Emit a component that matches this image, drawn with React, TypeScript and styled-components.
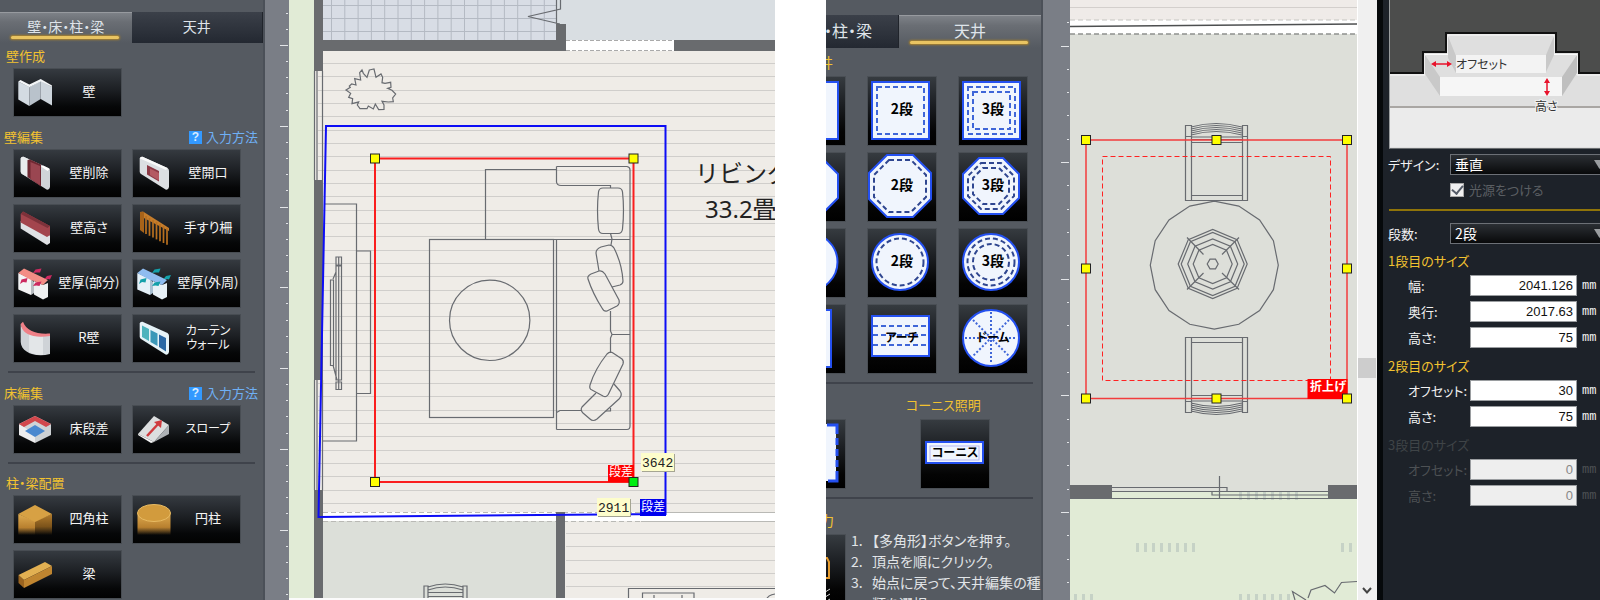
import React from "react";
import styled, { createGlobalStyle, css } from "styled-components";

const GlobalStyle = createGlobalStyle`
  * { box-sizing: border-box; }
  html, body, #root { height: 100%; }
  body {
    margin: 0;
    background: #fff;
    overflow: hidden;
    font-family: "Noto Sans CJK JP", "Liberation Sans", sans-serif;
    font-feature-settings: "palt";
    font-size: 13px;
    line-height: 20px;
  }
  button, select, input {
    font: inherit;
    font-feature-settings: inherit;
  }
`;

const line = "#686b70";
const gold = "#f2c230";

/* ---------- shared layout ---------- */

const Page = styled.main`
  display: flex;
  height: 100%;
  min-height: 600px;
  overflow: hidden;
`;

const Divider = styled.div`
  flex: 0 0 51px;
  background: #fff;
`;

const Sidebar = styled.aside<{ $width: number; $top: number }>`
  flex: 0 0 ${(p) => p.$width}px;
  padding-top: ${(p) => p.$top}px;
  background: #555a61;
  border-right: 2px solid #4b5058;
  overflow: hidden;
`;

const Ruler = styled.svg<{ $width: number }>`
  flex: 0 0 ${(p) => p.$width}px;
  width: ${(p) => p.$width}px;
  height: 100%;
  background: #7a7e86;
`;

const Canvas = styled.svg<{ $grow: number }>`
  display: block;
  flex: ${(p) => p.$grow} 1 0;
  min-width: 0;
  width: 0;
  height: 100%;
`;

const Tabs = styled.div<{ $height: number; $cols: string }>`
  display: grid;
  grid-template-columns: ${(p) => p.$cols};
  height: ${(p) => p.$height}px;
`;

const Tab = styled.button<{ $active?: boolean; $size: number }>`
  position: relative;
  padding: 0 0 4px;
  border: 0;
  color: #dfe4ea;
  font-size: ${(p) => p.$size}px;
  white-space: nowrap;
  background: linear-gradient(#3b4049, #2d323b 60%, #232831);
  border-right: 1px solid #20242b;
  ${(p) =>
    p.$active &&
    css`
      background: linear-gradient(#7d8187, #6a6e74 30%, #555a61);
      border-right: 0;
      border-top: 1px solid #979a9f;
      &::after {
        content: "";
        position: absolute;
        left: 11px;
        right: 13px;
        bottom: 4px;
        height: 3px;
        border-radius: 2px;
        background: #e9c462;
        box-shadow: 0 0 2px 1px #a9812a;
      }
    `}
`;

const CutTab = styled(Tab)`
  display: flex;
  align-items: center;
  justify-content: flex-end;
  padding-right: 26px;
`;

const Rule = styled.hr<{ $left?: number; $right: number }>`
  height: 2px;
  margin: 8px ${(p) => p.$right}px 0 ${(p) => p.$left ?? 0}px;
  border: 0;
  background: #3f434b;
`;

const Heading = styled.h2<{ $size?: number }>`
  margin: 0;
  font-size: ${(p) => p.$size ?? 13}px;
  font-weight: 400;
  line-height: 20px;
  color: ${gold};
  white-space: nowrap;
`;

/* ---------- wall tools ---------- */

const SectionHead = styled.div<{ $gap: number; $indent?: boolean }>`
  display: flex;
  justify-content: space-between;
  align-items: center;
  height: 20px;
  margin: ${(p) => p.$gap}px 5px 2px ${(p) => (p.$indent ? 6 : 4)}px;
`;

const HelpLink = styled.a`
  display: flex;
  align-items: center;
  gap: 4px;
  color: #6fb0f5;
  text-decoration: none;
`;

const HelpMark = styled.span`
  width: 13px;
  height: 13px;
  background: #3399ff;
  color: #d8ebff;
  font: bold 12px/13px "Liberation Sans", sans-serif;
  text-align: center;
`;

const ToolGrid = styled.div`
  display: grid;
  grid-template-columns: 109px 109px;
  gap: 6px 10px;
  padding-left: 13px;
`;

const Tool = styled.button`
  display: grid;
  grid-template-columns: 36px 1fr;
  align-items: center;
  gap: 5px;
  height: 49px;
  padding: 0 0 0 3px;
  border: 1px solid #484d53;
  background: linear-gradient(#353a40, #1c1f23 45%, #060708 80%, #020202);
  color: #f4f4f4;
  line-height: 14px;
  white-space: pre;
  svg {
    width: 36px;
    height: 36px;
  }
`;

const ToolLabel = styled.span<{ $small?: boolean }>`
  padding: 0 5px 4px 0;
  margin-right: -4px;
  font-size: ${(p) => (p.$small ? 12 : 13)}px;
  text-align: center;
`;

const slab = "M3.7 2.500Q4 .5 6.500 .8L31.500 12Q33 13 33 15V31Q32.500 34 30 33.700L5 18Q3.700 17 3.700 15.500Z";

const arrows = "M16 7L18.500 3.500 24.500 2.500 23 6.500 19.500 6.500ZM27.500 13L30 10 35 9 33 13.500 30.500 13ZM3 18L4.500 13.500 10.500 12 9.500 16.500 6 16ZM16 20L18.500 16.500 24.500 15.500 22.500 20 19.500 19.500Z";

const icons: Record<string, React.ReactNode> = {
  wall: (
    <>
      <path d="M1.3 6.5 12.3 12V31L1.3 24.5Z" fill="#d3dbe2" />
      <path d="M12.3 12 23.7 6V24L12.3 31Z" fill="#b9c2cb" />
      <path d="M23.7 6 35 12V30.5L23.7 24Z" fill="#cdd5dc" />
      <path d="M1.3 6.5 3.5 5 12.3 9.5 23.7 4 35 10.5 35 12 23.7 6.5 12.3 12.3Z" fill="#f2f5f7" />
    </>
  ),
  erase: (
    <>
      <path d={slab} fill="#d0d4d8" />
      <path d="M3.7 2.500Q4 .5 6.500 .8L12 3.300 10.500 5.500V21L5 18Q3.700 17 3.700 15.500Z" fill="#e9ebed" />
      <path d="M10.500 4 13 3.500 24 8.500V30.500L10.500 21Z" fill="#6f2832" />
      <path d="M13.500 6 23 10V29L13.500 23Z" fill="#9a4651" />
      <path d="M24 10.500 26 9.500 33 13 30.500 15Z" fill="#fff" />
    </>
  ),
  opening: (
    <>
      <path d={slab} fill="#dcdfe2" />
      <path d="M4 2.500Q4 .5 6.500 .8L31.500 12 30 14Z" fill="#fafafa" />
      <path d="M11 9 23 15V25.500L11 18.500Z" fill="#8c3a46" />
      <path d="M14 12.500 23 17V24.500L14 19Z" fill="#b45a63" />
    </>
  ),
  height: (
    <>
      <path d="M3.7 10 33 24.5V32L30 34 3.7 17.5Z" fill="#dfe1e4" />
      <path d="M3.7 3 6 .5 33 15V24L30 26 3.7 11.5Z" fill="#a3454d" />
      <path d="M3.7 3 6 .5 33 15 30.5 17Z" fill="#7d323a" />
    </>
  ),
  rail: (
    <>
      <path d="M4 1 7 .5 33 17V20L4 5Z" fill="#c57d2c" />
      <path d="M4 1H8V22L4 19Z" fill="#a86319" />
      {[10, 13.5, 17, 20.5, 24, 27.5, 31].map((x, i) => (
        <path key={x} d={`M${x} ${5 + i * 2}V${23 + i * 1.8}`} stroke="#b9701f" strokeWidth="1.7" />
      ))}
    </>
  ),
  partial: (
    <>
      <path d="M1.300 7 14 13V29L1.300 23.500Z" fill="#f3f4f5" />
      <path d="M14 13 17 16V27L14 29Z" fill="#b8bdc2" />
      <path d="M17 15 26 19 31 17V31L26 33.500 17 28.500Z" fill="#eef0f1" />
      <path d="M1.300 7 7 2.500 31 14 26 19 17 15 14 14Z" fill="#f38d85" />
      <path d={arrows} fill="#cc2a60" />
    </>
  ),
  outer: (
    <>
      <path d="M1.300 7 14 13V29L1.300 23.500Z" fill="#e4f0f8" />
      <path d="M14 13 17 16V27L14 29Z" fill="#a9c0d2" />
      <path d="M17 15 26 19 31 17V31L26 33.500 17 28.500Z" fill="#e8f1f7" />
      <path d="M1.300 7 7 2.500 31 14 26 19 17 15 14 14Z" fill="#8fbcf0" />
      <path d={arrows} fill="#14a0aa" />
    </>
  ),
  curve: (
    <>
      <path d="M3.7 3C6 13 20 16 33 14V33C18 37 4 31 3.7 21Z" fill="#cfd3d7" />
      <path d="M12 13C18 15 22 16 26 15V34C20 34 15 33 12 31Z" fill="#e3e6e8" />
      <path d="M3.7 3 6 .8C9 10 20 13.5 33 12.5V15C18 17.5 5 14 3.7 3Z" fill="#ef8087" />
    </>
  ),
  curtain: (
    <>
      <path d={slab} fill="#e6f3f8" />
      <path d="M6 4.500 13 8V20L6 16Z" fill="#4cb3bd" />
      <path d="M14.500 9 21.500 12.500V25L14.500 21Z" fill="#3b98b8" />
      <path d="M23 13.500 30 17V30.500L23 26Z" fill="#2a68a4" />
    </>
  ),
  step: (
    <>
      <path d="M2 12 18 20V31L2 23Z" fill="#ededee" />
      <path d="M34 12 18 20V31L34 23Z" fill="#cdd1d4" />
      <path d="M2 12 18 4 34 12 18 22Z" fill="#cfd3d6" />
      <path d="M8 19 18 13 28 19 18 25Z" fill="#4a88cf" />
      <path d="M2 12 18 4 34 12 29 15 18 9 7 15Z" fill="#d2474c" />
    </>
  ),
  slope: (
    <>
      <path d="M2 22 18 4 33 13 18 30Z" fill="#dcdedf" />
      <path d="M18 30 33 13V22L18 30Z" fill="#aeb2b6" />
      <path d="M2 22 18 30 15 31 2 23Z" fill="#f5f5f5" />
      <path d="M11 24 23 11" stroke="#cf3b3f" strokeWidth="2.500" fill="none" />
      <path d="M18 10 26 8 25 16Z" fill="#cf3b3f" />
    </>
  ),
  square: (
    <>
      <path d="M1.300 12 18 19V33H1.300Z" fill="url(#woodL)" />
      <path d="M35 12 18 19V33H35Z" fill="url(#woodR)" />
      <path d="M1.300 12 18 3 35 12 18 20Z" fill="#d7a144" />
    </>
  ),
  round: (
    <>
      <path d="M1.500 11V33H34.500V11Z" fill="url(#woodL)" />
      <ellipse cx="18" cy="11" rx="16.500" ry="8.500" fill="#d29b3d" stroke="#e8bb63" />
    </>
  ),
  beam: (
    <>
      <path d="M1.500 18 7 23V31L1.500 26Z" fill="#9a6420" />
      <path d="M1.500 18 28 5 35 9 7 23Z" fill="#e2b052" />
      <path d="M7 23 35 9V17L7 31Z" fill="#bf8530" />
    </>
  ),
};

type ToolSpec = { icon: string; label: string; small?: boolean };

function ToolButton({ icon, label, small }: ToolSpec) {
  return (
    <Tool type="button">
      <svg viewBox="0 0 36 36" aria-hidden="true">{icons[icon]}</svg>
      <ToolLabel $small={small}>{label}</ToolLabel>
    </Tool>
  );
}

const editTools: ToolSpec[] = [
  { icon: "erase", label: "壁削除" },
  { icon: "opening", label: "壁開口" },
  { icon: "height", label: "壁高さ" },
  { icon: "rail", label: "手すり柵" },
  { icon: "partial", label: "壁厚(部分)" },
  { icon: "outer", label: "壁厚(外周)" },
  { icon: "curve", label: "R壁" },
  { icon: "curtain", label: "カーテン\nウォール", small: true },
];

function Help() {
  return (
    <HelpLink href="#help">
      <HelpMark>?</HelpMark>
      入力方法
    </HelpLink>
  );
}

function WallTools() {
  return (
    <Sidebar $width={265} $top={12}>
      <Tabs $height={31} $cols="1fr 1fr">
        <Tab type="button" $active $size={14}>壁・床・柱・梁</Tab>
        <Tab type="button" $size={14}>天井</Tab>
      </Tabs>
      <SectionHead $gap={3} $indent>
        <Heading>壁作成</Heading>
      </SectionHead>
      <ToolGrid>
        <ToolButton icon="wall" label="壁" />
      </ToolGrid>
      <SectionHead $gap={10}>
        <Heading>壁編集</Heading>
        <Help />
      </SectionHead>
      <ToolGrid>
        {editTools.map((t) => (
          <ToolButton key={t.icon} {...t} />
        ))}
      </ToolGrid>
      <Rule $left={8} $right={8} />
      <SectionHead $gap={10}>
        <Heading>床編集</Heading>
        <Help />
      </SectionHead>
      <ToolGrid>
        <ToolButton icon="step" label="床段差" />
        <ToolButton icon="slope" label="スロープ" small />
      </ToolGrid>
      <Rule $left={8} $right={8} />
      <SectionHead $gap={9} $indent>
        <Heading>柱・梁配置</Heading>
      </SectionHead>
      <ToolGrid>
        <ToolButton icon="square" label="四角柱" />
        <ToolButton icon="round" label="円柱" />
        <ToolButton icon="beam" label="梁" />
      </ToolGrid>
      <svg width="0" height="0" aria-hidden="true">
        <defs>
          <linearGradient id="woodL" x1="0" y1="0" x2="0" y2="1">
            <stop offset="0" stopColor="#e0ac50" />
            <stop offset=".65" stopColor="#b8802f" />
            <stop offset="1" stopColor="#b8802f" stopOpacity="0" />
          </linearGradient>
          <linearGradient id="woodR" x1="0" y1="0" x2="0" y2="1">
            <stop offset="0" stopColor="#b27c2d" />
            <stop offset=".6" stopColor="#7c531a" />
            <stop offset="1" stopColor="#7c531a" stopOpacity="0" />
          </linearGradient>
        </defs>
      </svg>
    </Sidebar>
  );
}

/* ---------- rulers ---------- */

function Ticks({ width, first, pitch }: { width: number; first: number; pitch: number }) {
  const marks = Array.from({ length: 80 }, (_, i) => i - 4);
  return (
    <Ruler $width={width} aria-hidden="true">
      {marks.map((i) => (
        <rect
          key={i}
          x={i % 5 === 0 ? width - 9 : width - 3}
          y={Math.round(first + i * pitch)}
          width={i % 5 === 0 ? 8 : 2}
          height="1"
          fill="#e3e5e8"
        />
      ))}
    </Ruler>
  );
}

/* ---------- plan drawings ---------- */

const Outline = styled.g`
  fill: none;
  stroke: ${line};
  stroke-width: 1.2px;
`;

const RoomName = styled.text`
  font: 24px "Noto Sans", "Noto Sans CJK JP", sans-serif;
  font-feature-settings: normal;
  fill: #222;
`;

const TagText = styled.text<{ $bold?: boolean }>`
  font-size: 12px;
  font-weight: ${(p) => (p.$bold ? 700 : 400)};
  fill: #fff;
`;

const SizeText = styled.text`
  font: 13px "Liberation Mono", monospace;
  fill: #222;
`;

function Handle({ x, y, fill = "#ff0" }: { x: number; y: number; fill?: string }) {
  return <rect x={x - 4.5} y={y - 4.5} width="9" height="9" fill={fill} stroke="#222" />;
}

function SizeNote({ x, y, value }: { x: number; y: number; value: string }) {
  return (
    <>
      <rect x={x + 1} y={y + 1} width="33" height="18" fill="#a5a592" />
      <rect x={x} y={y} width="33" height="18" fill="#fdfdcb" />
      <SizeText x={x + 1} y={y + 14}>{value}</SizeText>
    </>
  );
}

const range = (n: number) => Array.from({ length: n }, (_, i) => i);

const plant =
  "208,210 222,207 228,232 243,222 248,232 246,248 255,250 272,247 273,262 263,265 276,271 287,282 278,294 280,305 265,306 246,304 252,315 252,328 236,329 226,312 220,327 205,318 201,326 180,326 172,315 176,306 156,311 158,296 146,292 152,280 138,270 151,262 148,258 155,252 168,255 164,236 182,240 179,218 186,210 190,220 201,232";

function LivingPlan() {
  return (
    <Canvas $grow={486} viewBox="289 0 486 600" preserveAspectRatio="xMinYMin slice">
      <rect x="289" y="0" width="486" height="600" fill="#efece7" />
      <rect x="289" y="0" width="25" height="600" fill="#e1ebd6" />
      <rect x="323" y="0" width="233" height="40" fill="#d8dde5" />
      <rect x="556" y="0" width="219" height="40" fill="#d9dee2" />
      <g stroke="#b4bac3">
        {range(17).map((i) => (
          <path key={i} d={`M${331.5 + i * 13.3} 0V40`} />
        ))}
        <path d="M323 5.500H556M323 18.500H556M323 31.500H556" />
      </g>
      <g stroke="#d0cecb">
        {range(34).map((i) => (
          <path key={i} d={`M318 ${Math.round(63 + i * 13.33) + 0.5}H775`} />
        ))}
        {range(5).map((i) => (
          <path key={i} d={`M566 ${Math.round(533 + i * 13.33) + 0.5}H775`} />
        ))}
      </g>
      <rect x="323" y="521" width="233" height="79" fill="#dcdfd9" />
      <rect x="323" y="512" width="452" height="9" fill="#fff" />
      <path d="M323 512.500H641M323 521.500H641" stroke="#b9b9b5" strokeDasharray="5 3" />
      <path d="M641 512.500H775M641 521.500H775" stroke="#b9b9b5" />
      <g fill="#696b6e">
        <rect x="314" y="0" width="9" height="71" />
        <rect x="314" y="180" width="9" height="200" />
        <rect x="314" y="490" width="9" height="110" />
        <rect x="314" y="40" width="252" height="11" />
        <rect x="556" y="24" width="10" height="17" />
        <rect x="674" y="40" width="101" height="11" />
        <rect x="556" y="512" width="9" height="88" />
      </g>
      <rect x="566" y="40" width="108" height="11" fill="#fff" />
      <path d="M566 40.500H674M566 50.500H674" stroke="#aaa" strokeDasharray="4 2" />
      <Outline>
        <path d="M314.500 71V180M317 71V180M322.500 71V180M314.500 380V490M317 380V490M322.500 380V490" />
        <path d="M556.500 0V24M560.500 0V9L528 16.500 560 24" />
        <polygon points={plant} transform="translate(300 0) scale(.3333)" vectorEffect="non-scaling-stroke" />
        <path d="M324 204H356.500V441H323M356.500 251H370.500V393.500H356.500" />
        <path d="M336 257h5.500v8h-5.500zM336 266h5.500v114h-5.500zM336 382h5.500v7.500h-5.500zM338.700 257V389M333 279L336 272M330.500 280h3v85.500h-3zM333 365L337 380" />
        <rect x="429.500" y="239.500" width="124" height="178" />
        <circle cx="489.700" cy="320.300" r="40.200" />
        <path d="M485.500 239.500V169.500H556.500M485 239.500H630M556.500 240V429.500" />
        <path d="M556.500 166.500V182Q557 185.500 561 185.500H610.500V188M556.500 166.500H627Q630 167 630 170V426Q630 429.500 627 429.500H556.500" />
        <path d="M603 188H618Q622 188 622.500 192 624.500 210 622.500 229 622 233.500 618 233.500H603Q599 233.500 598.500 229 596.500 210 598.500 192 599 188 603 188Z" />
        <path d="M610.500 233.500L612 239 611 245M610.500 311V331L612 334.500H630M612 334.500L610.500 338V353M556.500 412.500L560 410.500H582M610.500 408V411H606" />
        <path d="M599 271L596 253Q596 249 601 247L609 245Q612 245 614 248 622 264 623 281 623 284 620 285L612 287" />
        <path d="M588 279Q587 276 591 274L599 271Q602 270 605 274L619 300Q620 304 617 306L607 311Q604 312 602 308 593 294 588 279Z" />
        <path d="M607 354Q610 351 613 353L622 359Q624 361 623 364L609 393Q607 398 603 396L592 390Q589 389 590 385 595 369 607 354Z" />
        <path d="M596 393L582 407Q580 410 583 413L590 419Q593 422 597 419L619 399Q623 395 620 391L614 384" />
        <path d="M424 600V586H428V600M463 600V586H467V600M428 587Q445 581 463 587M428 590Q445 584 463 590M428 592.500H463M428 596.500H463" />
        <path d="M628.500 600V588.500H775M642.500 600V593H694V600M654 595V600M682 595V600M766 600Q768 595 775 594" />
      </Outline>
      <RoomName x="695" y="182">リビング</RoomName>
      <RoomName x="705" y="218">33.2畳</RoomName>
      <path d="M326 126H665.500V514L318.500 517Z" fill="none" stroke="#0d0df5" strokeWidth="2" />
      <rect x="375" y="158.500" width="258.500" height="323.500" fill="none" stroke="#fa1e1e" strokeWidth="2" />
      <rect x="608" y="465" width="26" height="17" fill="#f00" />
      <TagText x="609" y="476">段差</TagText>
      <Handle x={375} y={158.5} />
      <Handle x={633.5} y={158.5} />
      <Handle x={375} y={482} />
      <Handle x={633.5} y={482} fill="#0e1" />
      <rect x="640" y="499" width="26" height="17" fill="#00e" />
      <TagText x="641" y="511">段差</TagText>
      <SizeNote x={641} y={453} value="3642" />
      <SizeNote x={597} y={498} value="2911" />
      <rect x="289" y="598" width="486" height="2" fill="#fbfbfb" />
    </Canvas>
  );
}

function ring(cx: number, cy: number, r: number, n: number) {
  return range(n)
    .map((i) => {
      const a = (i / n) * Math.PI * 2;
      return `${(cx + r * Math.cos(a)).toFixed(1)},${(cy + r * Math.sin(a)).toFixed(1)}`;
    })
    .join(" ");
}

function GrassMarks({ x, y, n }: { x: number; y: number; n: number }) {
  return (
    <g fill="#c6d2c6">
      {range(n).map((i) => (
        <rect key={i} x={x + i * 8} y={y} width="3" height="9" />
      ))}
    </g>
  );
}

const chair =
  "M1185.500 125.500h6v75h-6zM1242.500 125.500h5v75h-5zM1185 136.500H1191M1242 136.500H1248M1191 137H1242M1191 139.500H1242M1191 142.500H1242M1191 195.500H1242M1191 200.500H1242" +
  "M1191 127Q1216 120 1242 127M1191 129Q1216 122 1242 129M1191 131Q1216 124 1242 131M1191 133Q1216 126 1242 133M1191 135Q1216 128 1242 135";

function CeilingPlan() {
  return (
    <Canvas $grow={287} viewBox="1070 0 287 600" preserveAspectRatio="xMinYMin slice">
      <rect x="1070" y="0" width="287" height="600" fill="#dddfd9" />
      <rect x="1070" y="0" width="287" height="20" fill="#efebe8" />
      <rect x="1070" y="20" width="287" height="14" fill="#fff" />
      <path d="M1070 7.500H1357" stroke="#d3cfcc" />
      <path d="M1070 20H1357" stroke="#c4c4c1" strokeDasharray="5 3" />
      <path d="M1070 34H1357" stroke="#8f918f" strokeWidth="1.500" strokeDasharray="5 3" />
      <path d="M1070 26.500L1357 24" stroke="#4d4f50" strokeWidth="1.500" />
      <rect x="1070" y="491" width="287" height="109" fill="#e1ebd6" />
      <GrassMarks x={1239} y={491} n={8} />
      <GrassMarks x={1136} y={543} n={8} />
      <GrassMarks x={1341} y={543} n={2} />
      <GrassMarks x={1074} y={594} n={3} />
      <GrassMarks x={1239} y={594} n={7} />
      <rect x="1112" y="487.500" width="115" height="4" fill="#dddfd9" />
      <rect x="1070" y="485" width="42" height="14" fill="#696b6e" />
      <rect x="1328" y="485" width="29" height="14" fill="#696b6e" />
      <Outline>
        <path d="M1070 498.500H1357M1112 487.500H1227V491M1112 491.500H1328M1328 495H1212V491M1219.500 476V499" />
        <path d="M1295 600L1292.500 591.500 1306 600M1308 598L1311 590 1325 585.500 1334.500 593 1341.500 582.500 1357 581.500" />
        <path d={chair} />
        <path d={chair} transform="matrix(1 0 0 -1 0 538)" />
        <polygon points={ring(1214.3, 265.2, 64, 16)} />
        {[34.5, 31.5, 25, 19.5].map((r) => (
          <polygon key={r} points={ring(1212.7, 264, r, 8)} />
        ))}
        <polygon points={ring(1212.7, 264, 5.5, 6)} />
        <path d="M1187 237.500L1203.500 254.500M1239 237.500L1222 254.500M1187 289.500L1203.500 273M1239 289.500L1222 273" />
      </Outline>
      <rect x="1086" y="140" width="261" height="258.500" fill="none" stroke="#f23c3c" strokeWidth="1.500" />
      <rect x="1102.500" y="156.500" width="228" height="224" fill="none" stroke="#f22" strokeDasharray="5 3" />
      <rect x="1307.500" y="379" width="40" height="20" fill="#f00" />
      <TagText x="1310" y="391" $bold>折上げ</TagText>
      {[1086, 1216.5, 1347].map((x) =>
        [140, 268.5, 398.5].map((y) =>
          x === 1216.5 && y === 268.5 ? null : <Handle key={`${x}-${y}`} x={x} y={y} />
        )
      )}
    </Canvas>
  );
}

/* ---------- ceiling tools ---------- */

const CutHeading = styled.div`
  display: flex;
  justify-content: flex-end;
  width: 7px;
  margin: 4px 0;
`;

const CeilingGrid = styled.div`
  display: grid;
  grid-template-columns: 20px 70px 70px;
  gap: 6px 21px;
`;

const CutCell = styled.div`
  display: flex;
  flex: 0 0 20px;
  justify-content: flex-end;
  overflow: hidden;
`;

const Shape = styled.button`
  flex: 0 0 70px;
  width: 70px;
  height: 70px;
  padding: 0;
  border: 1px solid #4a4f55;
  background: linear-gradient(#363b40, #1c1f23 40%, #040404 80%, #000);
  svg {
    display: block;
    width: 68px;
    height: 68px;
  }
`;

const ShapeText = styled.text<{ $small?: boolean }>`
  font-size: ${(p) => (p.$small ? 12 : 14)}px;
  font-weight: 700;
  fill: #000;
  text-anchor: middle;
`;

const CorniceHead = styled.div`
  margin: 11px 0 4px 80px;
`;

const CorniceRow = styled.div`
  display: flex;
  gap: 74px;
`;

const StepsHead = styled(CutHeading)`
  margin-top: 11px;
  width: 8px;
`;

const StepsRow = styled.div`
  display: flex;
  gap: 5px;
`;

const Steps = styled.ol`
  flex: 1;
  margin: -4px 0 0;
  padding: 0;
  color: #e2e5e8;
  font-size: 14px;
  line-height: 21px;
  list-style: none;
  li {
    display: flex;
  }
  b {
    flex: 0 0 21px;
    font-weight: 400;
  }
`;

const solid = { fill: "#f0f5fd", stroke: "#2450f0", strokeWidth: 2 };
const dashes = { fill: "none", stroke: "#3f66d8", strokeWidth: 2, strokeDasharray: "5 3" };
const darkDashes = { ...dashes, stroke: "#2f4690" };

function octagon(c: number, cy: number, r: number) {
  const k = Math.round(r * 0.42);
  return `M${c - k} ${cy - r}H${c + k}L${c + r} ${cy - k}V${cy + k}L${c + k} ${cy + r}H${c - k}L${c - r} ${cy + k}V${cy - k}Z`;
}

type ShapeProps = { label?: string; name: string; small?: boolean; children: React.ReactNode };

function ShapeButton({ label, name, small, children }: ShapeProps) {
  return (
    <Shape type="button" aria-label={name}>
      <svg viewBox="1 1 68 68">
        {children}
        {label && <ShapeText x="35" y="38" $small={small}>{label}</ShapeText>}
      </svg>
    </Shape>
  );
}

function CeilingTools() {
  return (
    <Sidebar $width={217} $top={15}>
      <Tabs $height={33} $cols="73px 1fr">
        <CutTab type="button" $size={16}>・柱・梁</CutTab>
        <Tab type="button" $active $size={16}>天井</Tab>
      </Tabs>
      <CutHeading>
        <Heading $size={14}>井</Heading>
      </CutHeading>
      <CeilingGrid>
        <CutCell>
          <ShapeButton name="四角 1">
            <rect x="5" y="6" width="57" height="57" {...solid} />
          </ShapeButton>
        </CutCell>
        <ShapeButton name="四角 2段" label="2段">
          <rect x="5" y="6" width="57" height="57" {...solid} />
          <rect x="10" y="11" width="47" height="47" {...dashes} />
        </ShapeButton>
        <ShapeButton name="四角 3段" label="3段">
          <rect x="5" y="6" width="57" height="57" {...solid} />
          <rect x="10" y="11" width="47" height="47" {...dashes} />
          <rect x="15" y="16" width="37" height="37" {...dashes} />
        </ShapeButton>
        <CutCell>
          <ShapeButton name="八角 1">
            <path d={octagon(33, 34, 29)} {...solid} />
          </ShapeButton>
        </CutCell>
        <ShapeButton name="八角 2段" label="2段">
          <path d={octagon(33, 34, 31)} {...solid} />
          <path d={octagon(33, 34, 26)} {...darkDashes} />
        </ShapeButton>
        <ShapeButton name="八角 3段" label="3段">
          <path d={octagon(33, 34, 28)} {...solid} />
          <path d={octagon(33, 34, 23)} {...darkDashes} />
          <path d={octagon(33, 34, 18)} {...darkDashes} />
        </ShapeButton>
        <CutCell>
          <ShapeButton name="円 1">
            <circle cx="33" cy="34" r="28.500" {...solid} />
          </ShapeButton>
        </CutCell>
        <ShapeButton name="円 2段" label="2段">
          <circle cx="33" cy="34" r="28" {...solid} />
          <circle cx="33" cy="34" r="23.500" {...darkDashes} />
        </ShapeButton>
        <ShapeButton name="円 3段" label="3段">
          <circle cx="33" cy="34" r="28" {...solid} />
          <circle cx="33" cy="34" r="23.500" {...darkDashes} />
          <circle cx="33" cy="34" r="18" {...darkDashes} />
        </ShapeButton>
        <CutCell>
          <ShapeButton name="勾配">
            <rect x="5" y="6" width="50" height="57" {...solid} />
          </ShapeButton>
        </CutCell>
        <ShapeButton name="アーチ" label="アーチ" small>
          <rect x="5" y="12" width="57" height="40" {...solid} />
          <path d="M6 22H62M6 31H62M6 41H62" {...dashes} />
        </ShapeButton>
        <ShapeButton name="ドーム" label="ドーム" small>
          <circle cx="33" cy="34" r="28" {...solid} />
          <path d="M33 8V60M7 34H59M15 16L51 52M51 16L15 52" {...dashes} strokeDasharray="2 2" />
        </ShapeButton>
      </CeilingGrid>
      <Rule $right={8} />
      <CorniceHead>
        <Heading>コーニス照明</Heading>
      </CorniceHead>
      <CorniceRow>
        <CutCell>
          <ShapeButton name="間接照明">
            <rect x="5" y="5" width="55" height="57" fill="#f0f5fd" />
            <path d="M51 6H61V62H51" fill="none" stroke="#2450f0" strokeWidth="3" strokeDasharray="19 4 7 4 7 4 7 4 19" />
          </ShapeButton>
        </CutCell>
        <ShapeButton name="コーニス" label="コーニス" small>
          <rect x="6" y="23" width="57" height="21" {...solid} />
          <rect x="10" y="27" width="49" height="14" fill="none" stroke="#b6b8f4" />
        </ShapeButton>
      </CorniceRow>
      <Rule $right={8} />
      <StepsHead>
        <Heading $size={14}>力</Heading>
      </StepsHead>
      <StepsRow>
        <CutCell>
          <ShapeButton name="多角形">
            <path d="M40 24H51L53 28V44H40" fill="none" stroke="#e59b2e" strokeWidth="2" />
            <path d="M46 60L54 55M46 65L54 60M46 70L54 65" stroke="#ddd" />
          </ShapeButton>
        </CutCell>
        <Steps>
          <li><b>1.</b><span>【多角形】ボタンを押す。</span></li>
          <li><b>2.</b><span>頂点を順にクリック。</span></li>
          <li><b>3.</b><span>始点に戻って、天井編集の種類を選択</span></li>
        </Steps>
      </StepsRow>
    </Sidebar>
  );
}

/* ---------- scroll bar ---------- */

const ScrollTrack = styled.div`
  display: flex;
  flex: 0 0 20px;
  flex-direction: column;
  align-items: center;
  min-width: 0;
  padding-right: 1px;
  background: #f0f0f0;
  border-left: 1px solid #fff;
`;

const Thumb = styled.div`
  width: 100%;
  height: 20px;
  margin-top: 358px;
  background: #cdcdcd;
`;

const ScrollArrow = styled.button`
  margin-top: auto;
  padding: 0;
  width: 18px;
  height: 18px;
  border: 0;
  background: none;
  svg { display: block; }
`;

/* ---------- properties ---------- */

const Props = styled.form`
  flex: 0 0 223px;
  border-left: 6px solid #06090b;
  background: #1d2229;
  color: #f2f2f2;
  overflow: hidden;
`;

const Preview = styled.svg`
  display: block;
  width: 211px;
  height: 149px;
  margin-left: 6px;
  border-left: 1px solid #9a9d9f;
  border-bottom: 1px solid #6a6d70;
`;

const PreviewText = styled.text`
  font-size: 12px;
  fill: #333;
  stroke: #f3f3f3;
  stroke-width: 2px;
  paint-order: stroke;
`;

const SelectRow = styled.div`
  display: grid;
  grid-template-columns: 62px 162px;
  align-items: center;
  height: 21px;
  margin: 5px 0 0 5px;
`;

const SelectWrap = styled.div`
  position: relative;
  svg {
    position: absolute;
    top: 6px;
    right: 7px;
    pointer-events: none;
  }
`;

const Select = styled.select`
  display: block;
  appearance: none;
  width: 100%;
  height: 21px;
  padding: 0 4px 1px;
  border: 1px solid #6c7076;
  border-radius: 0;
  background: linear-gradient(#2b2f34, #08090a);
  color: #fff;
  font-size: 14px;
  line-height: 18px;
`;

const CheckRow = styled.label`
  display: flex;
  align-items: center;
  gap: 5px;
  height: 20px;
  margin: 5px 0 0 67px;
  color: #5b5f63;
`;

const Check = styled.input`
  appearance: none;
  display: grid;
  place-items: center;
  width: 14px;
  height: 14px;
  margin: 0;
  border: 1px solid #aaa;
  background: #f0f0f0;
  &:checked::after {
    content: "";
    width: 5px;
    height: 9px;
    margin-top: -3px;
    border: solid #555c68;
    border-width: 0 2px 2px 0;
    transform: rotate(40deg);
  }
`;

const GoldRule = styled.hr`
  height: 2px;
  margin: 9px 0 12px 6px;
  border: 0;
  background: #8f7409;
`;

const Group = styled.fieldset`
  display: grid;
  gap: 5px;
  margin: 0;
  padding: 0 0 8px 5px;
  border: 0;
  min-width: 0;
  &:disabled { color: #4d5154; }
`;

const GroupTitle = styled.legend`
  padding: 0;
  height: 24px;
  line-height: 20px;
  color: ${gold};
  ${Group}:disabled & { color: #3f4447; }
`;

const Field = styled.label`
  display: grid;
  grid-template-columns: 62px 107px 24px;
  align-items: center;
  height: 21px;
  padding-left: 20px;
  white-space: nowrap;
`;

const Box = styled.input`
  width: 107px;
  height: 21px;
  padding: 0 3px;
  border: 1px solid #9a9da0;
  background: #fff;
  color: #111;
  font: 13px "Liberation Sans", sans-serif;
  text-align: right;
  &:disabled {
    background: #eee;
    color: #888;
  }
`;

const Unit = styled.span`
  padding-left: 5px;
  font: 12px "Liberation Mono", monospace;
`;

function Pick({ id, label, value }: { id: string; label: string; value: string }) {
  return (
    <SelectRow>
      <label htmlFor={id}>{label}</label>
      <SelectWrap>
        <Select id={id} defaultValue={value}>
          <option>{value}</option>
        </Select>
        <svg width="11" height="10" aria-hidden="true"><path d="M0 0H11L5.500 9Z" fill="#9a9da0" /></svg>
      </SelectWrap>
    </SelectRow>
  );
}

function SizeGroup({ title, fields, disabled }: { title: string; fields: [string, string][]; disabled?: boolean }) {
  return (
    <Group disabled={disabled}>
      <GroupTitle>{title}</GroupTitle>
      {fields.map(([label, value]) => (
        <Field key={label}>
          {label}
          <Box defaultValue={value} />
          <Unit>mm</Unit>
        </Field>
      ))}
    </Group>
  );
}

const GroupStack = styled.div`
  padding-top: 7px;
`;

function Properties() {
  return (
    <Props onSubmit={(e) => e.preventDefault()}>
      <Preview viewBox="1390 0 210 148">
        <rect x="1390" y="0" width="210" height="148" fill="#4c4d4c" />
        <path d="M1388 160V73H1423V52H1446V33H1556V52H1579V73H1602V160Z" fill="#dfdfdf" stroke="#111" strokeWidth="2" />
        <path d="M1390 75H1425V54.500H1448V35H1554V54.500H1577V75H1600" fill="none" stroke="#fafafa" />
        <path d="M1448 36L1456 56V73L1448 58ZM1554 36L1546 55V72L1554 55ZM1425 55L1440 77V96L1425 74Z" fill="#c9c9c9" />
        <path d="M1577 55L1562 77V96L1577 73Z" fill="#bfbfbf" />
        <rect x="1456" y="55" width="90" height="18" fill="#f3f3f3" />
        <rect x="1440" y="77" width="122" height="19" fill="#f6f6f6" />
        <rect x="1390" y="107" width="210" height="40" fill="#ebebeb" />
        <rect x="1390" y="106" width="210" height="2" fill="#a9a6a3" />
        <path d="M1434 64H1449M1547 81V93" stroke="#e8132c" strokeWidth="1.500" />
        <path d="M1431 64L1436 61V67ZM1452 64L1447 61V67ZM1547 78L1544 83H1550ZM1547 96L1544 91H1550Z" fill="#e8132c" />
        <PreviewText x="1456" y="69">オフセット</PreviewText>
        <PreviewText x="1535" y="111">高さ</PreviewText>
      </Preview>
      <Pick id="design" label="デザイン:" value="垂直" />
      <CheckRow>
        <Check type="checkbox" defaultChecked disabled />
        光源をつける
      </CheckRow>
      <GoldRule />
      <Pick id="steps" label="段数:" value="2段" />
      <GroupStack>
        <SizeGroup title="1段目のサイズ" fields={[["幅:", "2041.126"], ["奥行:", "2017.63"], ["高さ:", "75"]]} />
        <SizeGroup title="2段目のサイズ" fields={[["オフセット:", "30"], ["高さ:", "75"]]} />
        <SizeGroup title="3段目のサイズ" fields={[["オフセット:", "0"], ["高さ:", "0"]]} disabled />
      </GroupStack>
    </Props>
  );
}

export default function App() {
  return (
    <>
      <GlobalStyle />
      <Page>
        <WallTools />
        <Ticks width={24} first={45} pitch={16.15} />
        <LivingPlan />
        <Divider />
        <CeilingTools />
        <Ticks width={27} first={45.5} pitch={23.33} />
        <CeilingPlan />
        <ScrollTrack>
          <Thumb />
          <ScrollArrow type="button" aria-label="下へスクロール">
            <svg width="18" height="18" aria-hidden="true">
              <path d="M5 6L9 10.500 13 6" fill="none" stroke="#444" strokeWidth="2" />
            </svg>
          </ScrollArrow>
        </ScrollTrack>
        <Properties />
      </Page>
    </>
  );
}
